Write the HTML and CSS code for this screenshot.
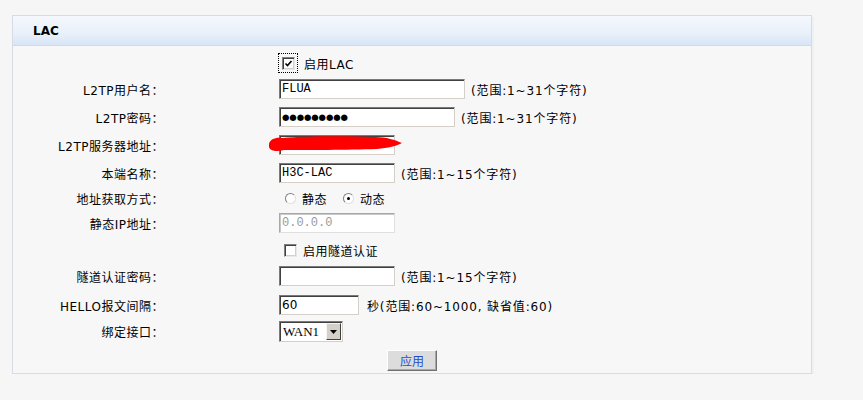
FILE: index.html
```html
<!DOCTYPE html>
<html lang="zh-CN">
<head>
  <meta charset="UTF-8" />
  <title>LAC</title>
  <link rel="stylesheet" href="styles.css">
</head>
<body>
  <div class="panel">
    <div class="panel-head">LAC</div>
    <div class="form">
      <div class="label"></div>
      <div class="field">
        <span class="focus-box"><span class="check on"><svg width="9" height="9" viewBox="0 0 9 9"><path d="M1.5 4.5 L3.5 6.5 L7.5 2" stroke="#000" stroke-width="1.6" fill="none"/></svg></span></span>
        <span class="text">启用LAC</span>
      </div>

      <div class="label">L2TP用户名：</div>
      <div class="field"><input class="txt w186" type="text" value="FLUA"><span class="hint">(范围:1~31个字符)</span></div>

      <div class="label">L2TP密码：</div>
      <div class="field"><input class="txt w176 pw" type="text" value="●●●●●●●●●"><span class="hint">(范围:1~31个字符)</span></div>

      <div class="label">L2TP服务器地址：</div>
      <div class="field">
        <input class="txt w115" type="text" value="">
        <svg class="scribble" width="140" height="22" viewBox="0 0 140 22">
          <path d="M2 10 C3 5 9 3 15 4 C40 2 80 2 108 3 C120 3 128 6 135 9 C130 12 121 14 110 15 C80 16 40 16 17 16 C10 18 3 17 2 13 Z" fill="#ff0000"/>
        </svg>
      </div>

      <div class="label">本端名称：</div>
      <div class="field"><input class="txt w115" type="text" value="H3C-LAC"><span class="hint">(范围:1~15个字符)</span></div>

      <div class="label">地址获取方式：</div>
      <div class="field radios">
        <span class="radio"></span><span class="text">静态</span>
        <span class="radio on"></span><span class="text">动态</span>
      </div>

      <div class="label">静态IP地址：</div>
      <div class="field"><input class="txt w115" type="text" value="0.0.0.0" disabled></div>

      <div class="label"></div>
      <div class="field">
        <span class="check plain"></span>
        <span class="text">启用隧道认证</span>
      </div>

      <div class="label">隧道认证密码：</div>
      <div class="field"><input class="txt w115" type="password" value=""><span class="hint">(范围:1~15个字符)</span></div>

      <div class="label">HELLO报文间隔：</div>
      <div class="field"><input class="txt w80 sans" type="text" value="60"><span class="hint wide">秒(范围:60~1000, 缺省值:60)</span></div>

      <div class="label">绑定接口：</div>
      <div class="field">
        <span class="select"><span class="select-val">WAN1</span><span class="select-btn"><svg width="7" height="4" viewBox="0 0 7 4"><path d="M0 0 H7 L3.5 4 Z" fill="#000"/></svg></span></span>
      </div>
    </div>
    <div class="actions">
      <button class="btn">应用</button>
    </div>
  </div>
</body>
</html>
```

FILE: styles.css
```css
* {
  box-sizing: border-box;
}
body {
  margin: 0;
  background: #f6f6f6;
  font-family: "DejaVu Sans", "Noto Sans CJK SC", sans-serif;
  font-size: 12px;
  color: #000;
}
.panel {
  margin: 15px 0 0 12px;
  width: 800px;
  height: 359px;
  background: #f7f7f7;
  border: 1px solid #d6dce6;
  box-shadow: 2px 2px 0 #eef0f4;
}
.panel-head {
  height: 30px;
  padding-left: 20px;
  line-height: 30px;
  font-weight: bold;
  background: linear-gradient(#f5f8fd, #e9f0fa 60%, #d8e5f7);
  border-bottom: 1px solid #cfdcef;
}
.form {
  display: grid;
  grid-template-columns: 151px 1fr;
  grid-template-rows: 26px 26px 30px 26px 30px 20px 30px 24px 28px 30px 22px;
  column-gap: 115px;
  padding-top: 4px;
}
.label {
  display: flex;
  align-items: center;
  justify-content: flex-end;
  white-space: nowrap;
  letter-spacing: 0.5px;
}
.field {
  position: relative;
  display: flex;
  align-items: center;
}
.text {
  margin-left: 6px;
  letter-spacing: 0.5px;
}
.focus-box {
  display: inline-flex;
  align-items: center;
  justify-content: center;
  width: 20px;
  height: 20px;
  margin-left: -1px;
  border: 1px dotted #000;
}
.check {
  display: inline-flex;
  align-items: center;
  justify-content: center;
  width: 13px;
  height: 13px;
  background: #fff;
  border: 1px solid;
  border-color: #808080 #e8e8e8 #e8e8e8 #808080;
  box-shadow: inset 1px 1px 0 #404040, inset -1px -1px 0 #d4d0c8;
}
.check.plain {
  margin-left: 5px;
}
.txt {
  height: 20px;
  margin: 0;
  padding: 0 2px;
  background: #fff;
  border: 1px solid;
  border-color: #7a7a7a #d4d0c8 #d4d0c8 #7a7a7a;
  box-shadow: inset 1px 1px 0 #404040;
  font-family: "Liberation Mono", monospace;
  font-size: 12px;
  color: #000;
  outline: none;
}
.txt.sans {
  font-family: "DejaVu Sans", sans-serif;
}
.txt.pw {
  font-family: "DejaVu Sans", sans-serif;
  font-size: 8.5px;
  letter-spacing: -0.1px;
}
.txt:disabled {
  color: #9a9a9a;
  border-color: #a8a8a8 #e0e0e0 #e0e0e0 #a8a8a8;
  box-shadow: inset 1px 1px 0 #c8c8c8;
}
.w186 { width: 186px; }
.w176 { width: 176px; }
.w115 { width: 116px; }
.w80 { width: 80px; }
.hint {
  margin-left: 6px;
  white-space: nowrap;
  letter-spacing: 0.85px;
}
.hint.wide {
  margin-left: 8px;
}
.scribble {
  position: absolute;
  left: -12px;
  top: 2px;
}
.radios {
  padding-left: 6px;
}
.radio {
  display: inline-block;
  width: 11px;
  height: 11px;
  border-radius: 50%;
  background: #fff;
  border: 1px solid;
  border-color: #808080 #e0e0e0 #e0e0e0 #808080;
  position: relative;
}
.radio.on::after {
  content: "";
  position: absolute;
  left: 3px;
  top: 3px;
  width: 3px;
  height: 3px;
  border-radius: 50%;
  background: #000;
}
.radios .text {
  margin-left: 6px;
  margin-right: 16px;
}
.select {
  display: inline-flex;
  align-items: center;
  width: 64px;
  height: 21px;
  margin-top: 1px;
  background: #fff;
  border: 1px solid;
  border-color: #7a7a7a #d4d0c8 #d4d0c8 #7a7a7a;
  box-shadow: inset 1px 1px 0 #404040;
}
.select-val {
  flex: 1;
  padding-left: 3px;
  font-family: "Liberation Serif", serif;
  font-size: 13px;
}
.select-btn {
  display: inline-flex;
  align-items: center;
  justify-content: center;
  width: 15px;
  height: 17px;
  margin-right: 1px;
  background: #d4d0c8;
  border: 1px solid;
  border-color: #f4f4f4 #404040 #404040 #f4f4f4;
}
.actions {
  display: flex;
  justify-content: flex-start;
  padding: 8px 0 0 374px;
}
.btn {
  width: 50px;
  height: 21px;
  padding: 0;
  background: #dcdcdc;
  border: 1px solid;
  border-color: #ffffff #707070 #707070 #ffffff;
  box-shadow: inset -1px -1px 0 #a8a8a8;
  font-family: "Noto Sans CJK SC", sans-serif;
  font-size: 12px;
  color: #1f4fd0;
}
```
